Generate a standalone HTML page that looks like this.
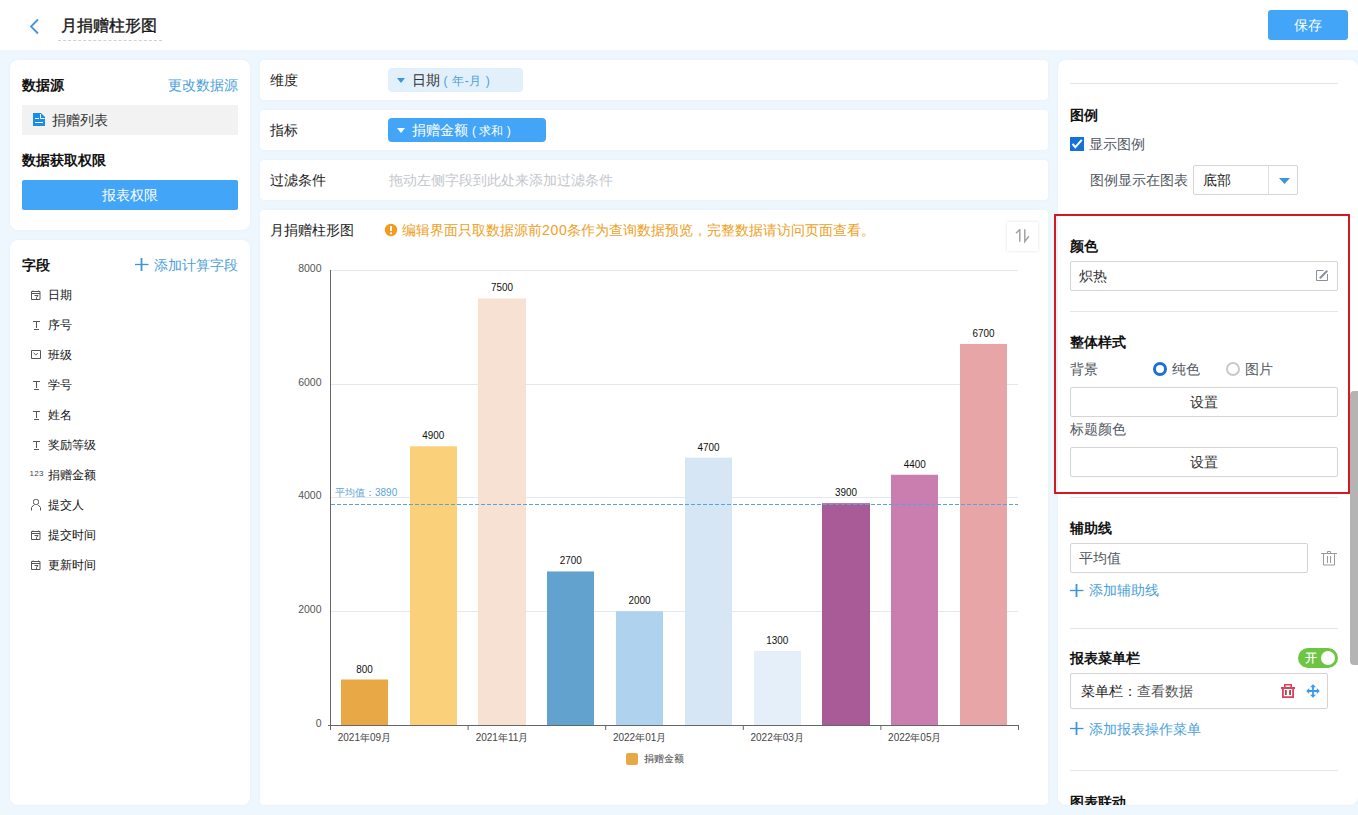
<!DOCTYPE html>
<html><head><meta charset="utf-8">
<style>
*{box-sizing:border-box;margin:0;padding:0}
html,body{width:1358px;height:815px;overflow:hidden}
body{position:relative;background:#eff7fe;font-family:"Liberation Sans",sans-serif;color:#333;font-size:14px}
.a{position:absolute;white-space:nowrap}
.hdr{position:absolute;left:0;top:0;width:1358px;height:50px;background:#fff}
.card{position:absolute;background:#fff;border-radius:8px;box-shadow:0 0 3px rgba(200,225,245,0.25)}
.t14{font-size:14px;line-height:20px}
.b{font-weight:bold;color:#111}
.link{color:#4b9fd9}
.ficon{position:absolute;left:31px;width:11px;height:11px;line-height:10px}
.ftxt{position:absolute;left:48px;font-size:12px;line-height:20px;color:#111}
.vl{font-size:11px;fill:#111}
.yl{font-size:10.5px;fill:#555}
.xl{font-size:10px;fill:#444}
.avg{font-size:10px;fill:#5aa3d9}
.inp{position:absolute;border:1px solid #d4d4d4;border-radius:2px;background:#fff}
.lbl{color:#4f5661}
</style></head><body>
<!-- header -->
<div class="hdr"></div>
<svg class="a" style="left:28px;top:18px" width="12" height="17" viewBox="0 0 12 17"><path d="M10 1.5L3 8.5l7 7" fill="none" stroke="#4893dc" stroke-width="1.8"/></svg>
<div class="a" style="left:61px;top:16px;font-size:16px;line-height:20px;color:#1a1a1a;-webkit-text-stroke:0.4px #1a1a1a">月捐赠柱形图</div>
<div class="a" style="left:58px;top:40px;width:104px;border-top:1px dashed #d0d0d0"></div>
<div class="a" style="left:1268px;top:10px;width:80px;height:30px;background:#42a5f8;border-radius:3px;color:#fff;font-size:14px;line-height:30px;text-align:center">保存</div>

<!-- left card 1 -->
<div class="card" style="left:10px;top:60px;width:240px;height:170px"></div>
<div class="a t14 b" style="left:22px;top:75px">数据源</div>
<div class="a t14 link" style="left:168px;top:75px">更改数据源</div>
<div class="a" style="left:22px;top:105px;width:216px;height:30px;background:#f2f2f2"></div>
<svg class="a" style="left:33px;top:113px" width="12" height="13" viewBox="0 0 12 13"><path d="M0 0h8l4 4v9H0z" fill="#1a8de6"/><path d="M7.5 1v4.5H11.5M2 5.5h4M2 9.5h8" fill="none" stroke="#fff" stroke-width="1"/></svg>
<div class="a t14" style="left:52px;top:110px;color:#333">捐赠列表</div>
<div class="a t14 b" style="left:22px;top:150px">数据获取权限</div>
<div class="a" style="left:22px;top:180px;width:216px;height:30px;background:#42a5f8;border-radius:2px;color:#fff;font-size:14px;line-height:30px;text-align:center">报表权限</div>

<!-- left card 2 -->
<div class="card" style="left:10px;top:240px;width:240px;height:565px"></div>
<div class="a t14 b" style="left:22px;top:255px">字段</div>
<svg class="a" style="left:135px;top:258px" width="14" height="13" viewBox="0 0 14 13"><path d="M6.5 0v13" stroke="#3d94dc" stroke-width="1.8"/><path d="M0 6.5h13.5" stroke="#3d94dc" stroke-width="1.3"/></svg>
<div class="a t14 link" style="left:154px;top:255px">添加计算字段</div>
<svg class="a" style="left:30px;top:289px" width="12" height="11" viewBox="0 0 12 11"><path d="M1.5 2.5h8.5v8H1.5z M1.5 4.5h8.5 M3 1.5v1.5 M8.5 1.5v1.5 M4.5 6.5h3.5l-1.5 2v2" fill="none" stroke="#555" stroke-width="1"/></svg><div class="ftxt" style="top:285px">日期</div>
<svg class="a" style="left:30px;top:319px" width="12" height="11" viewBox="0 0 12 11"><path d="M3 2.5h7M6.5 2.5v6.5M4 10.5h5" fill="none" stroke="#555" stroke-width="1"/></svg><div class="ftxt" style="top:315px">序号</div>
<svg class="a" style="left:30px;top:349px" width="12" height="11" viewBox="0 0 12 11"><path d="M1.5 1.5h9v8h-9z" fill="none" stroke="#555" stroke-width="1"/><path d="M3.5 3.8l2.3 2.2l2-2" fill="none" stroke="#555" stroke-width="1"/></svg><div class="ftxt" style="top:345px">班级</div>
<svg class="a" style="left:30px;top:379px" width="12" height="11" viewBox="0 0 12 11"><path d="M3 2.5h7M6.5 2.5v6.5M4 10.5h5" fill="none" stroke="#555" stroke-width="1"/></svg><div class="ftxt" style="top:375px">学号</div>
<svg class="a" style="left:30px;top:409px" width="12" height="11" viewBox="0 0 12 11"><path d="M3 2.5h7M6.5 2.5v6.5M4 10.5h5" fill="none" stroke="#555" stroke-width="1"/></svg><div class="ftxt" style="top:405px">姓名</div>
<svg class="a" style="left:30px;top:439px" width="12" height="11" viewBox="0 0 12 11"><path d="M3 2.5h7M6.5 2.5v6.5M4 10.5h5" fill="none" stroke="#555" stroke-width="1"/></svg><div class="ftxt" style="top:435px">奖励等级</div>
<div class="a" style="left:29.5px;top:468px;font-size:8px;line-height:11px;color:#444;letter-spacing:0.3px">123</div><div class="ftxt" style="top:465px">捐赠金额</div>
<svg class="a" style="left:30px;top:498px" width="12" height="13" viewBox="0 0 12 13"><rect x="3.5" y="1.5" width="5" height="5" rx="1.8" fill="none" stroke="#555" stroke-width="1"/><path d="M3.8 7L1.5 9.5V12.5M8.2 7l2.3 2.5V12.5" fill="none" stroke="#555" stroke-width="1"/></svg><div class="ftxt" style="top:495px">提交人</div>
<svg class="a" style="left:30px;top:529px" width="12" height="11" viewBox="0 0 12 11"><path d="M1.5 2.5h8.5v8H1.5z M1.5 4.5h8.5 M3 1.5v1.5 M8.5 1.5v1.5 M4.5 6.5h3.5l-1.5 2v2" fill="none" stroke="#555" stroke-width="1"/></svg><div class="ftxt" style="top:525px">提交时间</div>
<svg class="a" style="left:30px;top:559px" width="12" height="11" viewBox="0 0 12 11"><path d="M1.5 2.5h8.5v8H1.5z M1.5 4.5h8.5 M3 1.5v1.5 M8.5 1.5v1.5 M4.5 6.5h3.5l-1.5 2v2" fill="none" stroke="#555" stroke-width="1"/></svg><div class="ftxt" style="top:555px">更新时间</div>

<!-- middle rows -->
<div class="card" style="left:260px;top:60px;width:788px;height:40px;border-radius:4px"></div>
<div class="a t14" style="left:270px;top:70px;color:#222">维度</div>
<div class="a" style="left:388px;top:68px;width:135px;height:24px;background:#e2f0fc;border-radius:4px"></div>
<svg class="a" style="left:397px;top:78px" width="8" height="5" viewBox="0 0 8 5"><path d="M0 0h8L4 5z" fill="#3d96dc"/></svg>
<div class="a t14" style="left:412px;top:70px;color:#333">日期<span style="color:#4b9fd9;font-size:12px;margin-left:3.5px;letter-spacing:0.6px">( 年-月 )</span></div>

<div class="card" style="left:260px;top:110px;width:788px;height:40px;border-radius:4px"></div>
<div class="a t14" style="left:270px;top:120px;color:#222">指标</div>
<div class="a" style="left:388px;top:118px;width:158px;height:24px;background:#42a5f8;border-radius:4px"></div>
<svg class="a" style="left:397px;top:128px" width="8" height="5" viewBox="0 0 8 5"><path d="M0 0h8L4 5z" fill="#fff"/></svg>
<div class="a t14" style="left:412px;top:120px;color:#fff">捐赠金额<span style="font-size:12px;margin-left:4px">( 求和 )</span></div>

<div class="card" style="left:260px;top:160px;width:788px;height:40px;border-radius:4px"></div>
<div class="a t14" style="left:270px;top:170px;color:#222">过滤条件</div>
<div class="a t14" style="left:389px;top:170px;color:#c4c7cc">拖动左侧字段到此处来添加过滤条件</div>

<!-- chart card -->
<div class="card" style="left:260px;top:210px;width:788px;height:595px;border-radius:4px"></div>
<div class="a t14" style="left:270px;top:220px;color:#222">月捐赠柱形图</div>
<svg class="a" style="left:384px;top:223px" width="14" height="14" viewBox="0 0 14 14"><circle cx="7" cy="7" r="6.2" fill="#f29b1c"/><path d="M7 3v5" stroke="#fff" stroke-width="2"/><circle cx="7" cy="10.3" r="1.1" fill="#fff"/></svg>
<div class="a t14" style="left:402px;top:220px;color:#efa01c">编辑界面只取数据源前<span style="letter-spacing:0.7px">200</span>条作为查询数据预览，完整数据请访问页面查看。</div>
<div class="a" style="left:1007px;top:222px;width:31px;height:29px;background:#fff;box-shadow:0 0 3px rgba(0,0,0,0.12)"></div>
<svg class="a" style="left:1015px;top:229px" width="16" height="15" viewBox="0 0 16 15"><path d="M1 4.3L4.8 0.6V12.8M9.8 0.3V12.6L13.8 7.3" fill="none" stroke="#a3a3a3" stroke-width="1.5"/></svg>
<svg class="a" style="left:0;top:0" width="1358" height="815" viewBox="0 0 1358 815">
<line x1="330" y1="270.5" x2="1018" y2="270.5" stroke="#e3e7ee" stroke-width="1"/>
<line x1="330" y1="384.5" x2="1018" y2="384.5" stroke="#e3e7ee" stroke-width="1"/>
<line x1="330" y1="497.5" x2="1018" y2="497.5" stroke="#e3e7ee" stroke-width="1"/>
<line x1="330" y1="611.5" x2="1018" y2="611.5" stroke="#e3e7ee" stroke-width="1"/>
<rect x="341" y="679.50" width="47" height="45.50" fill="#e9a846"/>
<text transform="translate(364.4,672.5) scale(0.9,1)" text-anchor="middle" class="vl">800</text>
<rect x="410" y="446.31" width="47" height="278.69" fill="#fbd07a"/>
<text transform="translate(433.2,439.3) scale(0.9,1)" text-anchor="middle" class="vl">4900</text>
<rect x="478" y="298.44" width="48" height="426.56" fill="#f6e1d3"/>
<text transform="translate(502.0,291.4) scale(0.9,1)" text-anchor="middle" class="vl">7500</text>
<rect x="547" y="571.44" width="47" height="153.56" fill="#62a2cf"/>
<text transform="translate(570.8,564.4) scale(0.9,1)" text-anchor="middle" class="vl">2700</text>
<rect x="616" y="611.25" width="47" height="113.75" fill="#afd2ef"/>
<text transform="translate(639.6,604.2) scale(0.9,1)" text-anchor="middle" class="vl">2000</text>
<rect x="685" y="457.69" width="47" height="267.31" fill="#d7e6f4"/>
<text transform="translate(708.4,450.7) scale(0.9,1)" text-anchor="middle" class="vl">4700</text>
<rect x="754" y="651.06" width="47" height="73.94" fill="#e5eff9"/>
<text transform="translate(777.2,644.1) scale(0.9,1)" text-anchor="middle" class="vl">1300</text>
<rect x="822" y="503.19" width="48" height="221.81" fill="#a95b97"/>
<text transform="translate(846.0,496.2) scale(0.9,1)" text-anchor="middle" class="vl">3900</text>
<rect x="891" y="474.75" width="47" height="250.25" fill="#ca7eb0"/>
<text transform="translate(914.8,467.8) scale(0.9,1)" text-anchor="middle" class="vl">4400</text>
<rect x="960" y="343.94" width="47" height="381.06" fill="#e8a5a7"/>
<text transform="translate(983.6,336.9) scale(0.9,1)" text-anchor="middle" class="vl">6700</text>
<line x1="330.5" y1="270" x2="330.5" y2="730" stroke="#666" stroke-width="1"/>
<line x1="328" y1="725.5" x2="1018.5" y2="725.5" stroke="#666" stroke-width="1"/>
<line x1="330.5" y1="725" x2="330.5" y2="730" stroke="#666" stroke-width="1"/>
<line x1="468.1" y1="725" x2="468.1" y2="730" stroke="#666" stroke-width="1"/>
<line x1="605.7" y1="725" x2="605.7" y2="730" stroke="#666" stroke-width="1"/>
<line x1="743.3" y1="725" x2="743.3" y2="730" stroke="#666" stroke-width="1"/>
<line x1="880.9" y1="725" x2="880.9" y2="730" stroke="#666" stroke-width="1"/>
<line x1="1018.5" y1="725" x2="1018.5" y2="730" stroke="#666" stroke-width="1"/>
<text x="321.5" y="727.0" text-anchor="end" class="yl">0</text>
<text x="321.5" y="613.0" text-anchor="end" class="yl">2000</text>
<text x="321.5" y="499.0" text-anchor="end" class="yl">4000</text>
<text x="321.5" y="386.0" text-anchor="end" class="yl">6000</text>
<text x="321.5" y="272.0" text-anchor="end" class="yl">8000</text>
<text x="364.4" y="741" text-anchor="middle" class="xl">2021年09月</text>
<text x="502.0" y="741" text-anchor="middle" class="xl">2021年11月</text>
<text x="639.6" y="741" text-anchor="middle" class="xl">2022年01月</text>
<text x="777.2" y="741" text-anchor="middle" class="xl">2022年03月</text>
<text x="914.8" y="741" text-anchor="middle" class="xl">2022年05月</text>
<line x1="331" y1="504.5" x2="1018" y2="504.5" stroke="#5aa3d9" stroke-width="1" stroke-dasharray="4,2"/>
<text x="335" y="496" class="avg">平均值：3890</text>
<rect x="626" y="753" width="12" height="12" rx="2" fill="#e9a846"/>
<text x="644" y="762" class="xl">捐赠金额</text>
</svg>

<!-- right panel -->
<div class="card" style="left:1058px;top:60px;width:300px;height:745px;border-radius:8px"></div>
<div class="a" style="left:1070px;top:83px;width:268px;border-top:1px solid #e6e6e6"></div>
<div class="a t14 b" style="left:1070px;top:105px">图例</div>
<div class="a" style="left:1070px;top:137px;width:14px;height:14px;background:#1571da"></div>
<svg class="a" style="left:1071px;top:138px" width="12" height="12" viewBox="0 0 12 12"><path d="M1.5 5.8L4.3 9.2L10.8 1.8" fill="none" stroke="#fff" stroke-width="2"/></svg>
<div class="a t14 lbl" style="left:1089px;top:134px">显示图例</div>
<div class="a t14 lbl" style="left:1090px;top:170px">图例显示在图表</div>
<div class="inp" style="left:1193px;top:165px;width:105px;height:30px"></div>
<div class="a" style="left:1268px;top:166px;height:28px;border-left:1px solid #e0e0e0"></div>
<div class="a t14" style="left:1203px;top:170px;color:#222">底部</div>
<svg class="a" style="left:1279px;top:178px" width="11" height="6" viewBox="0 0 11 6"><path d="M0 0h11L5.5 6z" fill="#3d96dc"/></svg>

<div class="a t14 b" style="left:1070px;top:236px">颜色</div>
<div class="inp" style="left:1070px;top:261px;width:268px;height:30px"></div>
<div class="a t14" style="left:1078.5px;top:266px;color:#333">炽热</div>
<svg class="a" style="left:1315px;top:269px" width="14" height="13" viewBox="0 0 14 13"><path d="M8.5 1.5H1.5V11.5H12.5V5" fill="none" stroke="#8a9099" stroke-width="1"/><path d="M4.8 9.2L12.3 1.7" fill="none" stroke="#8a9099" stroke-width="2"/></svg>
<div class="a" style="left:1070px;top:311px;width:268px;border-top:1px solid #e6e6e6"></div>
<div class="a t14 b" style="left:1070px;top:332px">整体样式</div>
<div class="a t14 lbl" style="left:1070px;top:359px">背景</div>
<div class="a" style="left:1153px;top:362px;width:14px;height:14px;border:3.6px solid #1870d8;border-radius:50%"></div>
<div class="a t14 lbl" style="left:1172px;top:359px">纯色</div>
<div class="a" style="left:1226px;top:362px;width:14px;height:14px;border:2px solid #c9c9c9;border-radius:50%"></div>
<div class="a t14 lbl" style="left:1245px;top:359px">图片</div>
<div class="inp" style="left:1070px;top:387px;width:268px;height:30px;text-align:center;line-height:28px;color:#333">设置</div>
<div class="a t14 lbl" style="left:1070px;top:419px">标题颜色</div>
<div class="inp" style="left:1070px;top:447px;width:268px;height:30px;text-align:center;line-height:28px;color:#333">设置</div>
<div class="a" style="left:1054px;top:214px;width:296px;height:280px;border:2px solid #d41a20"></div>
<div class="a" style="left:1070px;top:497px;width:268px;border-top:1px solid #e6e6e6"></div>

<div class="a t14 b" style="left:1070px;top:518px">辅助线</div>
<div class="inp" style="left:1070px;top:543px;width:238px;height:30px"></div>
<div class="a t14 lbl" style="left:1079px;top:548px">平均值</div>
<svg class="a" style="left:1321px;top:550px" width="16" height="17" viewBox="0 0 16 17"><path d="M0 3.5h16M6.5 3.5V1.5h3v2M2.5 3.5V15H13.5V3.5M6.5 6v7M9.5 6v7" fill="none" stroke="#9a9a9a" stroke-width="1"/></svg>
<svg class="a" style="left:1070px;top:584px" width="14" height="13" viewBox="0 0 14 13"><path d="M6.5 0v13" stroke="#3d94dc" stroke-width="1.8"/><path d="M0 6.5h13.5" stroke="#3d94dc" stroke-width="1.3"/></svg>
<div class="a t14 link" style="left:1089px;top:580px">添加辅助线</div>
<div class="a" style="left:1070px;top:628px;width:268px;border-top:1px solid #e6e6e6"></div>

<div class="a t14 b" style="left:1070px;top:648px">报表菜单栏</div>
<div class="a" style="left:1298px;top:648px;width:40px;height:20px;background:#6cc644;border-radius:10px"></div>
<div class="a" style="left:1321px;top:651px;width:14px;height:14px;background:#fff;border-radius:50%"></div>
<div class="a" style="left:1305px;top:648px;font-size:12px;line-height:20px;color:#fff;-webkit-text-stroke:0.2px #fff">开</div>
<div class="inp" style="left:1070px;top:673px;width:258px;height:36px"></div>
<div class="a t14" style="left:1080.5px;top:681px;color:#222">菜单栏：<span style="color:#555">查看数据</span></div>
<svg class="a" style="left:1281px;top:684px" width="14" height="14" viewBox="0 0 14 14"><path d="M3.8 3.2V0.8H10.2V3.2" fill="none" stroke="#d9425a" stroke-width="1.6"/><rect x="0" y="3" width="14" height="2" fill="#d9425a"/><path d="M1.9 5V13.1H12.1V5" fill="none" stroke="#d9425a" stroke-width="1.8"/><rect x="3.9" y="6" width="1.9" height="5" fill="#a84a55"/><rect x="8.1" y="6" width="1.9" height="5" fill="#a84a55"/></svg>
<svg class="a" style="left:1306px;top:684px" width="14" height="14" viewBox="0 0 14 14"><path d="M7 1.5V12.5M1.5 7H12.5" stroke="#3d9ae8" stroke-width="1.8"/><path d="M4 3.2L7 0.2L10 3.2ZM4 10.8L7 13.8L10 10.8ZM3.2 4L0.2 7L3.2 10ZM10.8 4L13.8 7L10.8 10Z" fill="#3d9ae8"/></svg>
<svg class="a" style="left:1070px;top:722px" width="14" height="13" viewBox="0 0 14 13"><path d="M6.5 0v13" stroke="#3d94dc" stroke-width="1.8"/><path d="M0 6.5h13.5" stroke="#3d94dc" stroke-width="1.3"/></svg>
<div class="a t14 link" style="left:1089px;top:719px">添加报表操作菜单</div>
<div class="a" style="left:1070px;top:770px;width:268px;border-top:1px solid #e6e6e6"></div>
<div class="a" style="left:1058px;top:790px;width:290px;height:15px;overflow:hidden"><div class="a t14 b" style="left:12px;top:2px">图表联动</div></div>

<!-- scrollbar -->
<div class="a" style="left:1350px;top:391px;width:8px;height:274px;background:#b4b4b4;border-radius:4px 0 0 4px"></div>
</body></html>
